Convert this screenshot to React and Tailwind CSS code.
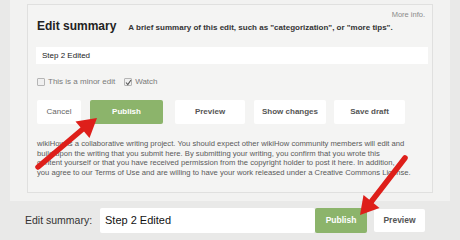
import React from "react";

const F = { fontFamily: '"Liberation Sans", Arial, sans-serif' };

function Box({ checked }) {
  return (
    <span className="relative inline-block w-[8px] h-[8px] border border-[#b5b5b5] bg-[#f0f0f0] rounded-[1px]">
      {checked && (
        <svg className="absolute left-0 top-0" width="7" height="7" viewBox="0 0 7 7">
          <path d="M1 3.5 L2.8 5.5 L6 1" stroke="#555" strokeWidth="1.1" fill="none" />
        </svg>
      )}
    </span>
  );
}

export default function App() {
  return (
    <div className="relative w-[460px] h-[240px] bg-[#e9e9e8] overflow-hidden" style={F}>
      {/* outer panel */}
      <div className="ml-[10px] w-[440px] h-[201px] bg-[#f2f2f1] pt-[4px] px-[17px]">
        <div className="h-[189px] border border-[#e0e0df] bg-[#f4f4f3] pt-[5px]">
          <div className="h-[9px] pr-[7px] text-right text-[7.5px] leading-[9px] text-[#8a8a8a]">More info.</div>
          <div className="flex items-baseline pl-[9px] h-[14px]">
            <span className="text-[12px] leading-[14px] font-bold text-[#222]">Edit summary</span>
            <span className="ml-[12px] text-[8px] font-bold text-[#333]">
              A brief summary of this edit, such as "categorization", or "more tips".
            </span>
          </div>
          <div className="mt-[14px] ml-[8px] w-[392px] h-[17px] bg-white flex items-center pl-[6px] text-[8px] text-[#222]">
            Step 2 Edited
          </div>
          <div className="mt-[13px] ml-[9px] h-[10px] flex items-center text-[8px] text-[#7a7a7a]">
            <Box />
            <span className="ml-[3px]">This is a minor edit</span>
            <span className="ml-[9px] flex items-center">
              <Box checked />
            </span>
            <span className="ml-[3px]">Watch</span>
          </div>
          <div className="mt-[13px] ml-[9px] flex h-[24px] text-[8px]">
            <div className="w-[44px] h-[24px] bg-white rounded-[2px] flex items-center justify-center text-[#666]">Cancel</div>
            <div className="ml-[9px] w-[73px] h-[24px] bg-[#8cb46b] rounded-[2px] flex items-center justify-center text-white font-bold">Publish</div>
            <div className="ml-[12px] w-[70px] h-[24px] bg-white rounded-[2px] flex items-center justify-center text-[#555] font-bold">Preview</div>
            <div className="ml-[9px] w-[72px] h-[24px] bg-white rounded-[2px] flex items-center justify-center text-[#555] font-bold">Show changes</div>
            <div className="ml-[8px] w-[71px] h-[24px] bg-white rounded-[2px] flex items-center justify-center text-[#555] font-bold">Save draft</div>
          </div>
          <div className="mt-[15px] ml-[9px] text-[7.65px] leading-[9.5px] text-[#5a5a5a] whitespace-nowrap">
            <div>wikiHow is a collaborative writing project. You should expect other wikiHow community members will edit and</div>
            <div>build upon the writing that you submit here. By submitting your writing, you confirm that you wrote this</div>
            <div>content yourself or that you have received permission from the copyright holder to post it here. In addition,</div>
            <div>you agree to our Terms of Use and are willing to have your work released under a Creative Commons License.</div>
          </div>
        </div>
      </div>
      {/* bottom bar */}
      <div className="flex items-center h-[39px] pl-[25px]">
        <span className="w-[75px] text-[10.5px] text-[#333]">Edit summary:</span>
        <div className="w-[215px] h-[25px] bg-white rounded-[2px] flex items-center pl-[5px] text-[11px] text-[#111]">Step 2 Edited</div>
        <div className="w-[52px] h-[25px] bg-[#8cb46b] rounded-[2px] flex items-center justify-center text-white font-bold text-[8.5px]">Publish</div>
        <div className="ml-[7px] w-[51px] h-[23px] bg-white rounded-[2px] flex items-center justify-center text-[#555] font-bold text-[8.5px]">Preview</div>
      </div>
      {/* arrows */}
      <svg className="absolute left-0 top-0 pointer-events-none" width="460" height="240">
        <line x1="38" y1="167" x2="84" y2="128" stroke="#de1f1a" strokeWidth="5.5" strokeLinecap="round" />
        <polygon points="97,118 89.5,138 75.5,121.5" fill="#de1f1a" />
        <line x1="405" y1="158" x2="371" y2="202" stroke="#de1f1a" strokeWidth="5.5" strokeLinecap="round" />
        <polygon points="360,215 379.5,208 363.5,195" fill="#de1f1a" />
      </svg>
    </div>
  );
}
